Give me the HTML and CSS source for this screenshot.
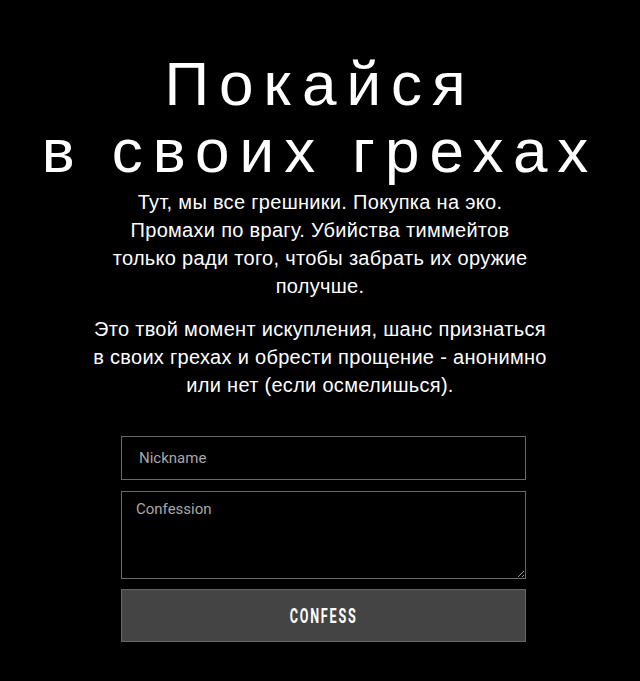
FILE: index.html
```html
<!DOCTYPE html>
<html lang="ru">
<head>
<meta charset="utf-8">
<title>Покайся</title>
<link rel="stylesheet" href="styles.css">
</head>
<body>
<main class="page">
  <h1 class="title">Покайся<br>в своих грехах</h1>
  <p class="lead lead-first">Тут, мы все грешники. Покупка на эко. Промахи по врагу. Убийства тиммейтов только ради того, чтобы забрать их оружие получше.</p>
  <p class="lead lead-second">Это твой момент искупления, шанс признаться в своих грехах и обрести прощение - анонимно или нет (если осмелишься).</p>
  <form class="form">
    <input class="field field-nick" type="text" placeholder="Nickname">
    <textarea class="field field-text" placeholder="Confession"></textarea>
    <button class="submit" type="button"><span class="submit-label">CONFESS</span></button>
  </form>
</main>
</body>
</html>
```
FILE: styles.css
```css
html, body {
  margin: 0;
  padding: 0;
  background: #000;
  color: #fff;
}
body {
  font-family: "Liberation Sans", Arial, sans-serif;
}
.page {
  display: flex;
  flex-direction: column;
  align-items: center;
  padding-top: 50px;
}
.title {
  margin: 0;
  font-weight: 400;
  font-size: 62px;
  line-height: 67px;
  letter-spacing: 10px;
  text-align: center;
  white-space: nowrap;
}
.lead {
  margin: 0;
  font-size: 20px;
  line-height: 28px;
  letter-spacing: 0.3px;
  text-align: center;
}
.lead-first {
  max-width: 432px;
  margin-top: 4px;
}
.lead-second {
  max-width: 468px;
  margin-top: 15px;
}
.form {
  width: 405px;
  display: flex;
  flex-direction: column;
  margin-top: 37px;
  margin-left: 7px;
}
.field {
  box-sizing: border-box;
  width: 100%;
  background: #000;
  border: 1px solid #6a6a6a;
  color: #ddd;
  font-family: "Roboto", sans-serif;
  font-size: 15px;
  margin: 0;
  outline: none;
}
.field::placeholder {
  color: #a8a8a8;
}
.field-nick {
  height: 44px;
  padding: 0 17px;
}
.field-text {
  height: 88px;
  margin-top: 11px;
  padding: 8px 14px;
  resize: vertical;
  display: block;
}
.submit {
  box-sizing: border-box;
  width: 100%;
  height: 53px;
  margin-top: 10px;
  background: #444;
  border: 1px solid #666;
  color: #fff;
  display: flex;
  align-items: center;
  justify-content: center;
  padding: 0;
}
.submit-label {
  display: inline-block;
  font-family: "Roboto", sans-serif;
  font-weight: 700;
  font-size: 21px;
  letter-spacing: 3px;
  transform: scaleX(0.6);
}
```
